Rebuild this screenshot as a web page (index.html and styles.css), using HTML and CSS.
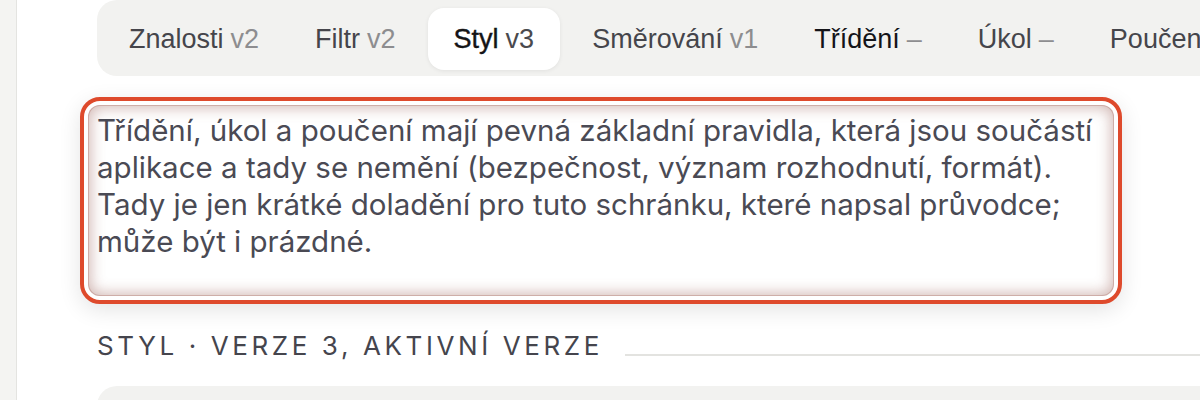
FILE: index.html
```html
<!DOCTYPE html>
<html lang="cs">
<head>
<meta charset="utf-8">
<title>Styl v3</title>
<link rel="stylesheet" href="styles.css">
</head>
<body>
<div class="rail"></div>
<main class="main">
  <nav class="tabs">
    <div class="tab">Znalosti <span class="ver">v2</span></div>
    <div class="tab">Filtr <span class="ver">v2</span></div>
    <div class="tab active">Styl <span class="ver">v3</span></div>
    <div class="tab">Směrování <span class="ver">v1</span></div>
    <div class="tab strong">Třídění <span class="ver">–</span></div>
    <div class="tab">Úkol <span class="ver">–</span></div>
    <div class="tab">Poučení <span class="ver">–</span></div>
  </nav>
  <div class="editor">
    <div class="field">Třídění, úkol a poučení mají pevná základní pravidla, která jsou součástí aplikace a tady se nemění (bezpečnost, význam rozhodnutí, formát). Tady je jen krátké doladění pro tuto schránku, které napsal průvodce; může být i prázdné.</div>
  </div>
  <div class="section">
    <span class="label">Styl · verze 3, aktivní verze</span>
    <span class="rule"></span>
  </div>
  <div class="panel"></div>
</main>
</body>
</html>
```
FILE: styles.css
```css
html, body {
  margin: 0;
  padding: 0;
  background: #ffffff;
}
body {
  display: flex;
  width: 1200px;
  height: 400px;
  overflow: hidden;
  font-family: "Inter", "Noto Sans", sans-serif;
}
.rail {
  flex: none;
  width: 16px;
  background: #f4f4f2;
  border-right: 1px solid #e4e4e1;
}
.main {
  flex: none;
  width: 1240px;
  padding-left: 80px;
}
.tabs {
  display: flex;
  gap: 8px;
  padding: 8px 8px 6px;
  background: #f2f2f0;
  border-radius: 20px;
  white-space: nowrap;
  width: max-content;
}
.tab {
  display: flex;
  align-items: center;
  gap: 7px;
  height: 62px;
  padding: 0 24px;
  border-radius: 16px;
  font-family: "Liberation Sans", Arial, sans-serif;
  font-size: 27px;
  color: #45454b;
}
.tab .ver {
  color: #8d8d8f;
}
.tab.strong {
  color: #141418;
}
.tab.active {
  padding: 0 26px 0 26px;
  background: #ffffff;
  color: #141416;
  -webkit-text-stroke: 0.4px #141416;
  box-shadow: 0 1px 4px rgba(0, 0, 0, 0.07);
}
.tab.active .ver {
  color: #4a4a4e;
  -webkit-text-stroke: 0;
}
.editor {
  margin: 21px 0 0 -17px;
  width: 1026px;
  padding: 4px;
  border: 4px solid #de4a2c;
  border-radius: 20px;
  background: #ffffff;
  box-shadow: 0 6px 22px rgba(0, 0, 0, 0.11);
}
.field {
  box-sizing: border-box;
  height: 191px;
  padding: 7px 4px 0 9px;
  border-radius: 12px;
  font-size: 29.5px;
  line-height: 37px;
  color: #4a4a54;
  box-shadow: inset 0 0 0 1px rgba(185, 135, 128, 0.5), inset 0 0 14px 3px rgba(150, 90, 82, 0.42);
}
.section {
  display: flex;
  align-items: flex-end;
  gap: 22px;
  margin-top: 26px;
}
.label {
  font-size: 26px;
  line-height: 32px;
  font-weight: 400;
  letter-spacing: 3.6px;
  text-transform: uppercase;
  color: #45454d;
  white-space: nowrap;
}
.rule {
  flex: 1;
  height: 2px;
  margin-bottom: 6px;
  background: #e3e3e0;
}
.panel {
  margin-top: 24px;
  height: 80px;
  background: #f2f2f0;
  border-radius: 20px;
}
```
